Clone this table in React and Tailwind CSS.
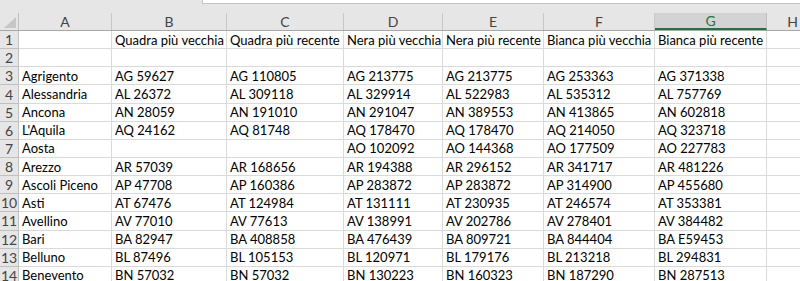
import React from "react";

const cols = ["A", "B", "C", "D", "E", "F", "G", "H"];
const widths = [93, 115, 117, 99, 101, 111, 112, 52];

const rows = [
  ["", "Quadra più vecchia", "Quadra più recente", "Nera più vecchia", "Nera più recente", "Bianca più vecchia", "Bianca più recente"],
  ["", "", "", "", "", "", ""],
  ["Agrigento", "AG 59627", "AG 110805", "AG 213775", "AG 213775", "AG 253363", "AG 371338"],
  ["Alessandria", "AL 26372", "AL 309118", "AL 329914", "AL 522983", "AL 535312", "AL 757769"],
  ["Ancona", "AN 28059", "AN 191010", "AN 291047", "AN 389553", "AN 413865", "AN 602818"],
  ["L'Aquila", "AQ 24162", "AQ 81748", "AQ 178470", "AQ 178470", "AQ 214050", "AQ 323718"],
  ["Aosta", "", "", "AO 102092", "AO 144368", "AO 177509", "AO 227783"],
  ["Arezzo", "AR 57039", "AR 168656", "AR 194388", "AR 296152", "AR 341717", "AR 481226"],
  ["Ascoli Piceno", "AP 47708", "AP 160386", "AP 283872", "AP 283872", "AP 314900", "AP 455680"],
  ["Asti", "AT 67476", "AT 124984", "AT 131111", "AT 230935", "AT 246574", "AT 353381"],
  ["Avellino", "AV 77010", "AV 77613", "AV 138991", "AV 202786", "AV 278401", "AV 384482"],
  ["Bari", "BA 82947", "BA 408858", "BA 476439", "BA 809721", "BA 844404", "BA E59453"],
  ["Belluno", "BL 87496", "BL 105153", "BL 120971", "BL 179176", "BL 213218", "BL 294831"],
  ["Benevento", "BN 57032", "BN 57032", "BN 130223", "BN 160323", "BN 187290", "BN 287513"],
];

export default function App() {
  return (
    <div
      className="w-[800px] h-[281px] overflow-hidden bg-white text-black"
      style={{ fontFamily: "Lato, 'Open Sans', sans-serif" }}
    >
      {/* top strip with formula bar edge */}
      <div className="h-[13px] bg-[#e6e6e6] flex">
        <div className="ml-[202px] flex-1 h-[4px] bg-white border-l border-b border-[#c4c4c4]" />
      </div>

      {/* column header row */}
      <div className="flex h-[18px] bg-[#e6e6e6] border-b border-[#a8a8a8] text-[14px] text-[#444]">
        <div className="w-[19px] shrink-0 relative border-r border-[#c0c0c0]">
          <svg className="absolute right-[2px] bottom-[2px]" width="12" height="11" viewBox="0 0 12 11">
            <polygon points="12,0 12,11 0,11" fill="#c6c6c6" />
          </svg>
        </div>
        {cols.map((c, i) => (
          <div
            key={c}
            style={{ width: widths[i] }}
            className={
              c === "G"
                ? "shrink-0 flex items-center justify-center bg-[#d3d3d3] border-r border-[#c0c0c0] border-b-2 border-b-[#217346] text-[#217346]"
                : "shrink-0 flex items-center justify-center border-r border-[#c8c8c8]"
            }
          >
            {c}
          </div>
        ))}
      </div>

      {/* data rows */}
      {rows.map((r, ri) => (
        <div key={ri} className="flex h-[18.15px] text-[13px]">
          <div className="w-[19px] shrink-0 flex items-center justify-center bg-[#e6e6e6] border-r border-b border-[#c0c0c0] text-[#444] text-[14px]">
            {ri + 1}
          </div>
          {cols.map((c, ci) => (
            <div
              key={c}
              style={{ width: widths[ci] }}
              className="shrink-0 flex items-center px-[3px] pt-[1px] border-r border-b border-[#dadada] whitespace-nowrap overflow-hidden leading-none"
            >
              {ci < 7 ? r[ci] : ""}
            </div>
          ))}
        </div>
      ))}
    </div>
  );
}
